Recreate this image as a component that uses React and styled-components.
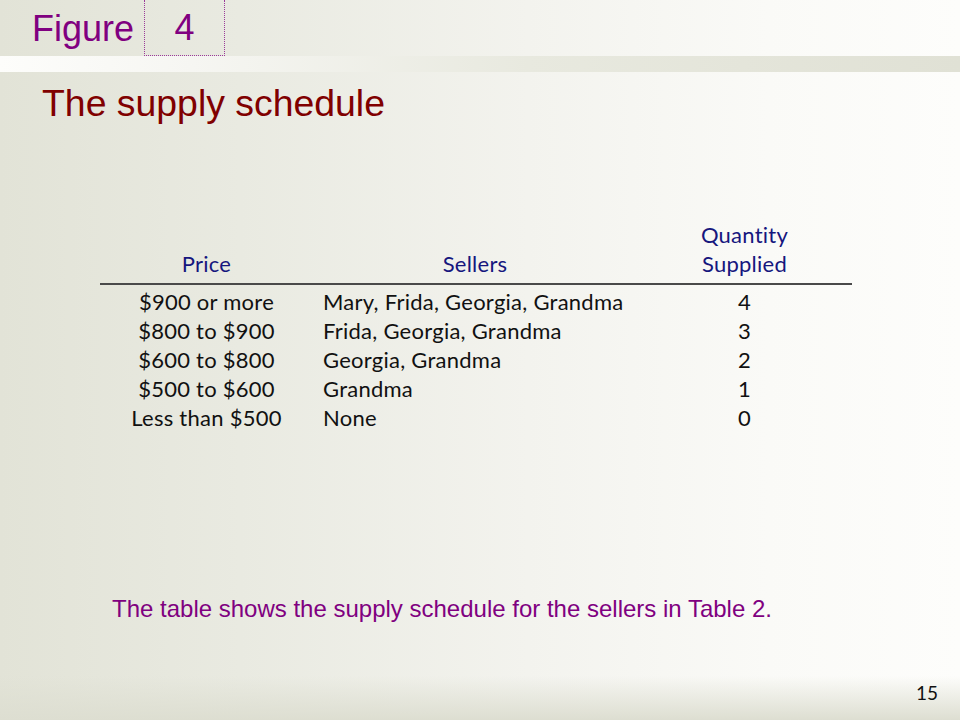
import React from "react";
import styled, { createGlobalStyle } from "styled-components";

const GlobalStyle = createGlobalStyle`
  html, body { margin: 0; padding: 0; }
  body { width: 960px; height: 720px; overflow: hidden; }
`;

const Page = styled.div`
  position: relative;
  width: 960px;
  height: 720px;
  display: flex;
  flex-direction: column;
  background:
    linear-gradient(to bottom, rgba(221, 222, 209, 0) 0px, rgba(221, 222, 209, 0) 676px, rgba(221, 222, 209, 1) 720px),
    linear-gradient(to right, #e2e3d7 0%, #e9eae1 25%, #f3f3ee 55%, #fafaf7 80%, #fdfdfb 100%);
  font-family: "Liberation Sans", Arial, sans-serif;
  overflow: hidden;
`;

const Header = styled.div`
  height: 56px;
  display: flex;
  align-items: stretch;
  flex-shrink: 0;
`;

const FigureLabel = styled.div`
  padding: 2px 10px 0 32px;
  font-size: 36px;
  line-height: 54px;
  color: #800080;
`;

const FigureBox = styled.div`
  box-sizing: border-box;
  width: 81px;
  border: 1px dotted #9a3a9a;
  border-top: none;
  text-align: center;
  padding-top: 2px;
  font-size: 36px;
  line-height: 52px;
  color: #800080;
`;

const Band = styled.div`
  height: 16px;
  flex-shrink: 0;
  background: linear-gradient(to right, #fdfdfb 0%, #f6f6f2 20%, #e8e9df 55%, #e0e1d5 100%);
`;

const Title = styled.h1`
  margin: 9px 0 0 42px;
  font-weight: normal;
  font-size: 37.4px;
  line-height: 44px;
  color: #800000;
`;

const Table = styled.div`
  margin: 95px 0 0 100px;
  width: 752px;
  display: grid;
  grid-template-columns: 213px 324px 215px;
  font-family: Lato, "Open Sans", sans-serif;
  font-size: 22px;
  line-height: 29px;
  letter-spacing: 0.25px;
  font-variant-ligatures: none;
  color: #111;
`;

const HeadCell = styled.div`
  display: flex;
  flex-direction: column;
  justify-content: flex-end;
  align-items: center;
  padding-bottom: 5px;
  border-bottom: 2px solid #4a4a4a;
  color: #16167e;
  text-align: center;
`;

const BodyCol = styled.div`
  display: flex;
  flex-direction: column;
  padding: 2px 0 0 ${(p) => (p.$align === "left" ? "10px" : "0")};
  align-items: ${(p) => (p.$align === "left" ? "flex-start" : "center")};
  white-space: nowrap;
`;

const Caption = styled.p`
  margin: 163px 0 0 112px;
  font-size: 24px;
  line-height: 28px;
  color: #800080;
`;

const Footer = styled.div`
  margin-top: auto;
  padding: 0 22px 15px 0;
  text-align: right;
  font-family: Lato, "Open Sans", sans-serif;
  font-size: 19px;
  line-height: 24px;
  color: #111;
`;

const rows = [
  ["$900 or more", "Mary, Frida, Georgia, Grandma", "4"],
  ["$800 to $900", "Frida, Georgia, Grandma", "3"],
  ["$600 to $800", "Georgia, Grandma", "2"],
  ["$500 to $600", "Grandma", "1"],
  ["Less than $500", "None", "0"],
];

export default function App() {
  return (
    <>
      <GlobalStyle />
      <Page>
        <Header>
          <FigureLabel>Figure</FigureLabel>
          <FigureBox>4</FigureBox>
        </Header>
        <Band />
        <Title>The supply schedule</Title>
        <Table>
          <HeadCell>Price</HeadCell>
          <HeadCell>Sellers</HeadCell>
          <HeadCell>
            <span>Quantity</span>
            <span>Supplied</span>
          </HeadCell>
          <BodyCol>
            {rows.map((r) => (
              <span key={r[0]}>{r[0]}</span>
            ))}
          </BodyCol>
          <BodyCol $align="left">
            {rows.map((r) => (
              <span key={r[0]}>{r[1]}</span>
            ))}
          </BodyCol>
          <BodyCol>
            {rows.map((r) => (
              <span key={r[0]}>{r[2]}</span>
            ))}
          </BodyCol>
        </Table>
        <Caption>The table shows the supply schedule for the sellers in Table 2.</Caption>
        <Footer>15</Footer>
      </Page>
    </>
  );
}
